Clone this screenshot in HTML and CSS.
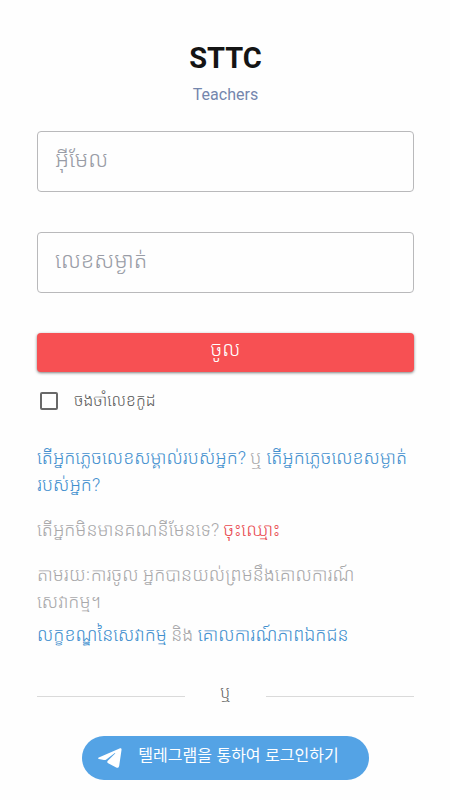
FILE: index.html
```html
<!DOCTYPE html>
<html lang="km">

<head>
  <meta charset="utf-8">
  <meta name="viewport" content="width=device-width, initial-scale=1">
  <title>STTC</title>
  <link rel="stylesheet" href="styles.css">
</head>

<body>
  <main class="login-container">
    <header class="login-header">
      <h1>STTC</h1>
      <p>Teachers</p>
    </header>

    <form class="login-form">
      <input class="text-field" type="email" placeholder="អ៊ីមែល" aria-label="អ៊ីមែល">
      <input class="text-field" type="password" placeholder="លេខសម្ងាត់" aria-label="លេខសម្ងាត់">
      <button class="login-button" type="submit">ចូល</button>
      <div class="remember">
        <input type="checkbox" id="remember">
        <label for="remember">ចងចាំលេខកូដ</label>
      </div>
    </form>

    <div class="login-links">
      <p><a href="#">តើអ្នកភ្លេចលេខសម្គាល់របស់អ្នក?</a> ឬ <a href="#">តើអ្នកភ្លេចលេខសម្ងាត់<wbr>របស់អ្នក?</a></p>
      <p>តើអ្នកមិនមានគណនីមែនទេ? <a class="register" href="#">ចុះឈ្មោះ</a></p>
      <p>តាមរយៈការចូល អ្នកបានយល់ព្រមនឹងគោលការណ៍<br>សេវាកម្ម។</p>
      <p class="terms"><a href="#">លក្ខខណ្ឌនៃសេវាកម្ម</a> និង <a href="#">គោលការណ៍ភាពឯកជន</a></p>
    </div>

    <div class="divider"><span>ឬ</span></div>

    <button class="telegram-button" type="button" lang="ko">
      <svg width="24" height="20" viewBox="0 0 24 20" aria-hidden="true">
        <path fill="#fff" d="M.8 9.600 21.500.4c1.500-.6 2.200.1 2 1.500l-2.300 15.900c-.3 1.800-1.400 2.500-3 1.700l-8-4.300c-1.100-.6-1.200-1.500-.4-2.400l7.100-7c.6-.6.2-.9-.4-.5L8.300 11.400c-.8.6-1.500.7-2.400.5L.9 11c-1-.2-1-1-.1-1.400z"/>
      </svg>
      <span>텔레그램을 통하여 로그인하기</span>
    </button>
  </main>
</body>

</html>
```
FILE: styles.css
```css
* {
  box-sizing: border-box;
}

body {
  margin: 0;
  background: #fefefe;
  color: #a8a8aa;
  font-family: Roboto, "Noto Sans Khmer", "Khmer OS", "Noto Sans CJK KR", sans-serif;
  font-size: 18px;
  font-weight: 300;
}

.login-container {
  padding: 40px 36px 16px 37px;
}

.login-header {
  text-align: center;
}

.login-header h1 {
  margin: 0;
  color: #141414;
  font-size: 29px;
  font-weight: 700;
  line-height: 36px;
}

.login-header p {
  margin: 8px 0 0;
  color: #7486ad;
  font-size: 16px;
  font-weight: 400;
  line-height: 22px;
}

.login-form {
  display: flex;
  flex-direction: column;
  margin-top: 25px;
}

.text-field {
  width: 100%;
  height: 61px;
  margin-bottom: 40px;
  padding: 0 17px 4px;
  border: 1px solid #b9b9bb;
  border-radius: 4px;
  background: #fefefe;
  color: #141414;
  font-family: inherit;
  font-size: 22px;
  font-weight: 300;
}

.text-field::placeholder {
  color: #999ca6;
  opacity: 1;
}

.login-button {
  height: 39px;
  padding: 0 0 8px;
  border: none;
  border-radius: 4px;
  background: #f75053;
  box-shadow: 0 1px 3px rgba(0, 0, 0, 0.5);
  color: #fff;
  font-family: inherit;
  font-size: 20px;
  font-weight: 300;
  line-height: 30px;
  cursor: pointer;
}

.remember {
  display: flex;
  align-items: center;
  gap: 16px;
  margin-top: 18px;
  padding-left: 3px;
  color: #5c5c5c;
  font-size: 16px;
  line-height: 22px;
}

.remember input {
  appearance: none;
  width: 18px;
  height: 18px;
  margin: 0;
  border: 2px solid #686868;
  border-radius: 2px;
}

.remember input:checked {
  background: #686868;
}

.login-links {
  margin-top: 32px;
  line-height: 27px;
}

.login-links p {
  margin: 0 0 18px;
}

.login-links .terms {
  margin-top: -12px;
}

.login-links a {
  color: #418fce;
  text-decoration: none;
}

.login-links .register {
  color: #e94a50;
}

.divider {
  display: flex;
  align-items: center;
  gap: 35px;
  margin-top: 32px;
  color: #5c5c5c;
  font-size: 16px;
  line-height: 26px;
}

.divider span {
  padding-bottom: 6px;
}

.divider::before,
.divider::after {
  content: "";
  flex: 1;
  border-top: 1px solid #dadada;
}

.telegram-button {
  display: flex;
  align-items: center;
  gap: 16px;
  height: 44px;
  margin: 24px auto 0;
  padding: 0 30px 0 16px;
  border: none;
  border-radius: 22px;
  background: #54a3e5;
  color: #fff;
  font-family: "Noto Sans CJK KR", sans-serif;
  font-size: 16px;
  cursor: pointer;
}

.telegram-button span {
  padding-bottom: 8px;
}
```
